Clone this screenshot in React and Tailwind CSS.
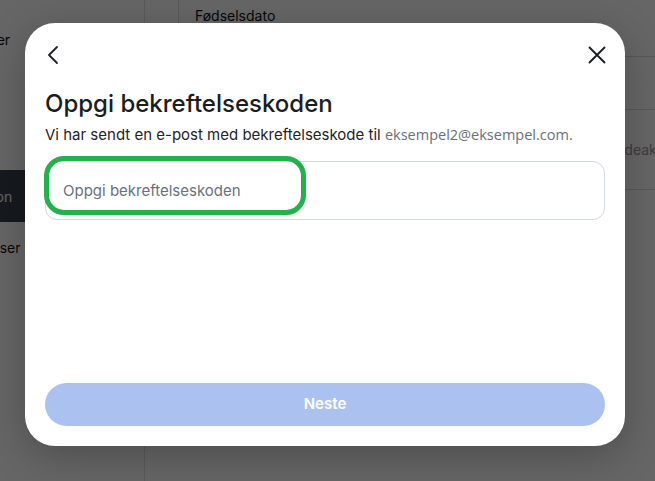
import React from "react";

function ChevronLeft() {
  return (
    <svg width="24" height="24" viewBox="0 0 24 24" fill="none" stroke="#1c1f23" strokeWidth="1.8" strokeLinecap="round" strokeLinejoin="round">
      <path d="M15 4 7 12l8 8" />
    </svg>
  );
}

function CloseIcon() {
  return (
    <svg width="24" height="24" viewBox="0 0 24 24" fill="none" stroke="#1c1f23" strokeWidth="1.9" strokeLinecap="round">
      <path d="M4.5 4.5l15 15M19.5 4.5l-15 15" />
    </svg>
  );
}

export default function App() {
  return (
    <div className="relative w-[655px] h-[481px] overflow-hidden bg-white font-['Inter',sans-serif]">
      {/* background page (scrolled sideways) */}
      <div className="flex h-full">
        <aside className="-ml-[120px] w-[265px] shrink-0 border-r border-[#e2e2e2] flex flex-col pt-[29px] text-[14px] text-[#111]">
          <div className="pl-4 h-[22px] leading-[22px] whitespace-nowrap">Kontoinnstillinger</div>
          <div className="mt-[119px] h-[52px] bg-[#37414b] text-white pl-4 flex items-center whitespace-nowrap">Kontoinformasjon</div>
          <div className="mt-[15px] pl-4 h-[22px] leading-[22px] whitespace-nowrap">Apper og tillatelser</div>
        </aside>
        <main className="flex-1 pl-[33px]">
          <div className="border-l border-[#e2e2e2]">
            <div className="pl-[16px] border-b border-[#dcdcdc] h-[57px] pt-[5px] text-[14px] text-[#111]">Fødselsdato</div>
            <div className="border-b border-[#dcdcdc] h-[53px]"></div>
            <div className="border-b border-[#dcdcdc] h-[80px] grid grid-cols-[407px_1fr] items-center text-[14px] text-[#999]">
              <span className="pl-[16px]">Status</span>
              <span className="whitespace-nowrap">Kontodeaktivering</span>
            </div>
          </div>
        </main>
      </div>

      {/* overlay */}
      <div className="absolute inset-0 bg-black/60"></div>

      {/* modal */}
      <div className="absolute left-[25px] top-[23px] w-[600px] h-[423px] rounded-[30px] bg-white shadow-[0_10px_40px_rgba(0,0,0,0.25)] flex flex-col px-5 pb-5">
        <div className="mt-[20px] h-[24px] flex items-center justify-between">
          <button className="-ml-[3px]"><ChevronLeft /></button>
          <button className="-mr-[4px]"><CloseIcon /></button>
        </div>
        <h1 className="mt-[21px] text-[24px] leading-[32px] font-medium text-[#1a1d21]">Oppgi bekreftelseskoden</h1>
        <p className="mt-[5px] text-[15px] leading-[20px] text-[#1f2328] whitespace-nowrap">
          Vi har sendt en e-post med bekreftelseskode til{" "}
          <span className="text-[#6b6f76] text-[14.5px] font-['Open_Sans',sans-serif]">eksempel2@eksempel.com.</span>
        </p>
        <div className="relative mt-[16px]">
          <input
            className="w-full h-[59px] rounded-[12px] border border-[#d3d7de] pl-[17px] text-[15px] text-[#1f2328] placeholder:text-[#69707d] outline-none"
            placeholder="Oppgi bekreftelseskoden"
          />
          <div className="pointer-events-none absolute -left-[1px] -top-[5px] w-[262px] h-[59px] rounded-[20px] border-[5px] border-[#22b14c]"></div>
        </div>
        <button className="mt-auto h-[43px] w-full rounded-full bg-[#abc2f1] text-white text-[15px] font-semibold">Neste</button>
      </div>
    </div>
  );
}
